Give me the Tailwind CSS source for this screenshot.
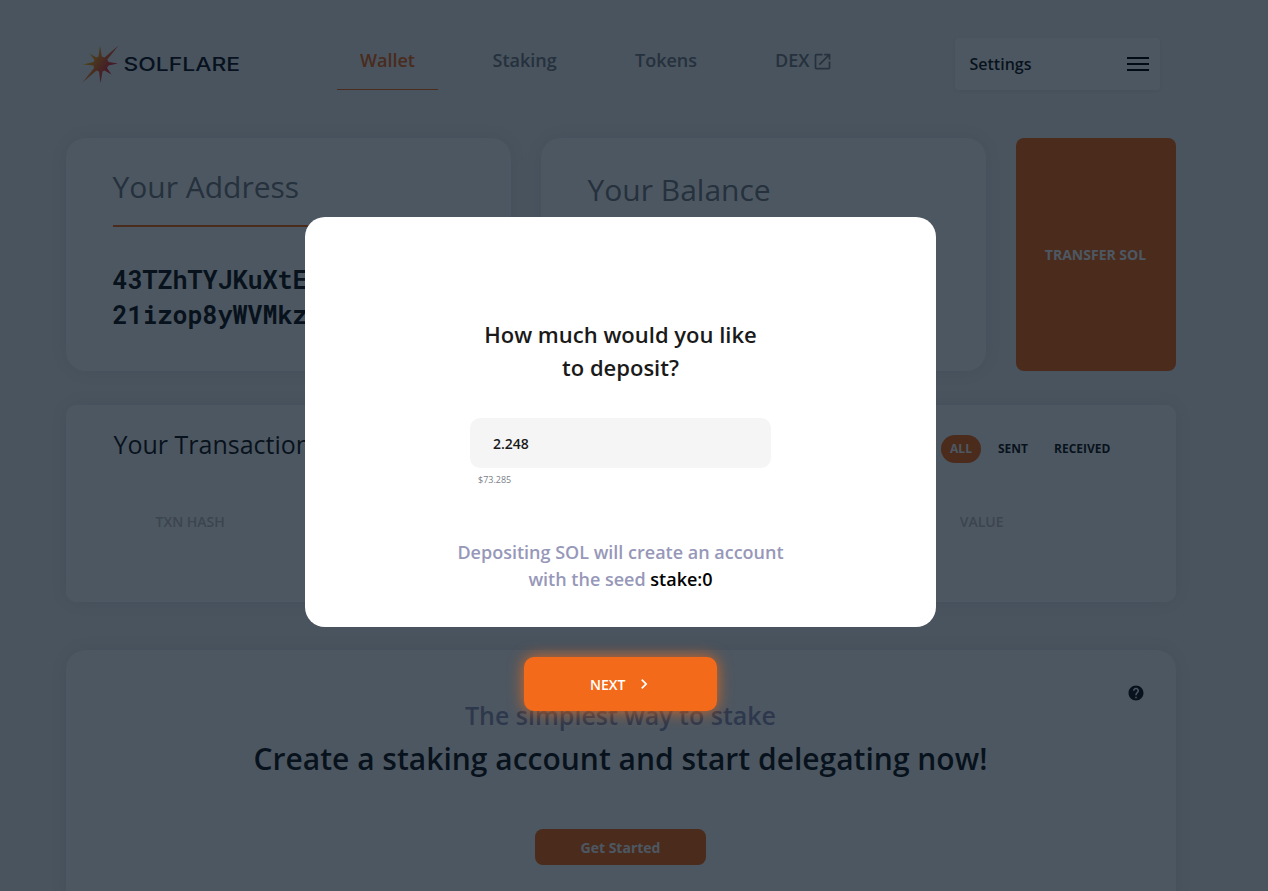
<!DOCTYPE html>
<html lang="en">
<head>
<meta charset="utf-8">
<title>Solflare</title>
<script src="https://cdn.jsdelivr.net/npm/@tailwindcss/browser@4"></script>
</head>
<body class="font-['Open_Sans','Noto_Sans',sans-serif] text-[#1a1a1a]">
<div class="relative h-[891px] w-[1268px] overflow-hidden bg-[#f2f4f6]">
  <div class="flex flex-col pl-[66px] pr-[92px]">
    <header class="flex h-[138px] items-start">
      <svg class="ml-[16px] mt-[44px] h-10 w-[160px]" viewBox="0 0 160 40">
        <defs>
          <linearGradient id="sun" x1="0" y1="0.2" x2="0.9" y2="0.8">
            <stop offset="0.15" stop-color="#ffc10b"/>
            <stop offset="0.75" stop-color="#e2383f"/>
          </linearGradient>
        </defs>
        <path fill="url(#sun)" d="M18 1.500 L19.800 12.500 L22.500 13.500 L36.500 1.500 L25.300 15.500 L26.500 18 L36 19.500 L26.500 21.500 L25 24 L29.500 30.500 L22.500 26.500 L20.500 27.500 L18.500 39 L17 27.500 L14.500 26.500 L0.500 38.500 L12 24 L11.500 21.500 L1 20.500 L11.500 18 L12.500 16 L7.500 9.500 L14.500 13.500 L16.500 12.500 Z"/>
        <text x="41.500" y="26.800" font-family="Inter, sans-serif" font-size="18.500" font-weight="500" textLength="116.500" lengthAdjust="spacingAndGlyphs" fill="#14181f">SOLFLARE</text>
      </svg>
      <nav class="ml-[95px] mt-[38px] flex text-[18px] font-semibold leading-[45px] text-[#7b8088]">
        <div class="h-[52px] w-[101px] border-b border-[#f36b1a] text-center text-[#f36b1a]">Wallet</div>
        <div class="ml-[54.500px] w-[64.500px] whitespace-nowrap">Staking</div>
        <div class="ml-[78px] w-[62px] whitespace-nowrap">Tokens</div>
        <div class="ml-[78px] flex w-[60px] items-start whitespace-nowrap">DEX
          <svg class="ml-[3px] mt-[13px] h-[21px] w-[21px] shrink-0" viewBox="0 0 24 24" fill="currentColor"><path d="M19 19H5V5h7V3H5a2 2 0 0 0-2 2v14a2 2 0 0 0 2 2h14c1.100 0 2-.9 2-2v-7h-2v7zM14 3v2h3.590l-9.830 9.830 1.410 1.410L19 6.410V10h2V3h-7z"/></svg>
        </div>
      </nav>
      <div class="ml-[120px] mt-[38px] flex h-[52px] w-[205px] items-center justify-between rounded-[4px] bg-white pl-[14.500px] pr-[11px] shadow-[0_1px_4px_rgba(60,70,110,0.07)]">
        <span class="text-[16px] font-semibold">Settings</span>
        <div class="flex w-[22px] flex-col gap-1">
          <div class="h-[2px] bg-black"></div><div class="h-[2px] bg-black"></div><div class="h-[2px] bg-black"></div>
        </div>
      </div>
    </header>

    <main class="flex flex-col">
      <div class="flex h-[233px] gap-[30px]">
        <section class="w-[445px] rounded-[20px] bg-white px-[47px] pt-[28px] shadow-[0_0_20px_rgba(70,80,140,0.1)]">
          <h2 class="border-b-2 border-[#f36b1a] pb-[17px] text-[30px] leading-[42px] text-[#7b8088]"><span class="-ml-[0.5px]">Your Address</span></h2>
          <p class="-ml-[0.5px] mt-[35px] font-['Roboto_Mono','DejaVu_Sans_Mono',monospace] text-[25px] font-bold leading-[35px]">43TZhTYJKuXtE<br>21izop8yWVMkz</p>
        </section>
        <section class="w-[445px] rounded-[20px] bg-white px-[46.500px] pt-[31px] shadow-[0_0_20px_rgba(70,80,140,0.1)]">
          <h2 class="text-[30px] leading-[42px] text-[#7b8088]">Your Balance</h2>
        </section>
        <button class="w-[160px] rounded-[8px] bg-[#f36b1a] pr-px text-[14px] font-bold text-white">TRANSFER SOL</button>
      </div>

      <section class="mt-[34px] h-[197px] rounded-[10px] bg-white shadow-[0_0_20px_rgba(70,80,140,0.1)]">
        <div class="flex items-start justify-between pl-[47.500px] pr-[66px]">
          <h3 class="mt-[21px] text-[25px] leading-[36px]">Your Transactions</h3>
          <div class="mt-[30px] flex items-center text-[12px] font-bold leading-[28px]">
            <span class="w-[40px] rounded-full bg-[#f36b1a] text-center text-white">ALL</span>
            <span class="ml-[17px] w-[30px] whitespace-nowrap">SENT</span>
            <span class="ml-[26px] w-[56px] whitespace-nowrap">RECEIVED</span>
          </div>
        </div>
        <div class="mt-[49px] flex justify-between pl-[89.500px] pr-[172.500px] text-[14px] font-semibold leading-[20px] text-[#c0c1c4]">
          <span>TXN HASH</span><span>VALUE</span>
        </div>
      </section>

      <section class="mt-[48px] flex h-[260px] flex-col items-center rounded-[20px] bg-white pr-px shadow-[0_0_20px_rgba(70,80,140,0.1)]">
        <div class="mt-[34px] flex h-[18px] w-full justify-end pr-[30px]">
          <svg class="h-[18px] w-[18px]" viewBox="0 0 24 24" fill="#1a1a1f"><path d="M12 2C6.480 2 2 6.480 2 12s4.480 10 10 10 10-4.480 10-10S17.520 2 12 2zm1 17h-2v-2h2v2zm2.070-7.750-.9.920C13.450 12.900 13 13.500 13 15h-2v-.5c0-1.100.45-2.100 1.170-2.830l1.240-1.260c.37-.36.59-.86.59-1.410 0-1.100-.9-2-2-2s-2 .9-2 2H8c0-2.210 1.790-4 4-4s4 1.790 4 4c0 .88-.36 1.680-.93 2.250z"/></svg>
        </div>
        <p class="-mt-[5px] text-[25px] font-semibold leading-[36px] text-[#9798b9]">The simplest way to stake</p>
        <h2 class="mt-[5px] text-[30px] font-semibold leading-[42px]">Create a staking account and start delegating now!</h2>
        <button class="mt-[49px] h-[36px] w-[171px] rounded-[8px] bg-[#f36b1a] text-[14px] font-bold text-white">Get Started</button>
      </section>
    </main>
  </div>

  <div class="absolute inset-0 flex flex-col items-center bg-[#010f1e]/70 pr-[27px] pt-[217px]">
    <div class="flex h-[410px] w-[631px] flex-col items-center rounded-[20px] bg-white text-center">
      <h1 class="mt-[101px] text-[22px] font-semibold leading-[33px]">How much would you like<br>to deposit?</h1>
      <div class="mt-[34px] flex h-[50px] w-[301px] items-center rounded-[10px] bg-[#f5f5f5] pl-[23px] text-[14px] font-semibold">2.248</div>
      <div class="mt-[5px] w-[301px] pl-[8px] text-left text-[9px] leading-[14px] text-[#7b8088]">$73.285</div>
      <p class="mt-[52px] text-[18px] font-semibold leading-[27px] text-[#9798b9]">Depositing SOL will create an account<br>with the seed <span class="text-black">stake:0</span></p>
    </div>
    <button class="mt-[30px] flex h-[54px] w-[193px] shrink-0 items-center justify-center gap-[8.500px] rounded-[10px] bg-[#f36b1a] pl-[3px] text-[14px] font-semibold text-white shadow-[0_0_15px_rgba(243,107,26,0.85)]">NEXT
      <svg class="h-5 w-5" viewBox="0 0 24 24" fill="currentColor"><path d="M10 6 8.590 7.410 13.170 12l-4.580 4.590L10 18l6-6z"/></svg>
    </button>
  </div>
</div>
</body>
</html>
